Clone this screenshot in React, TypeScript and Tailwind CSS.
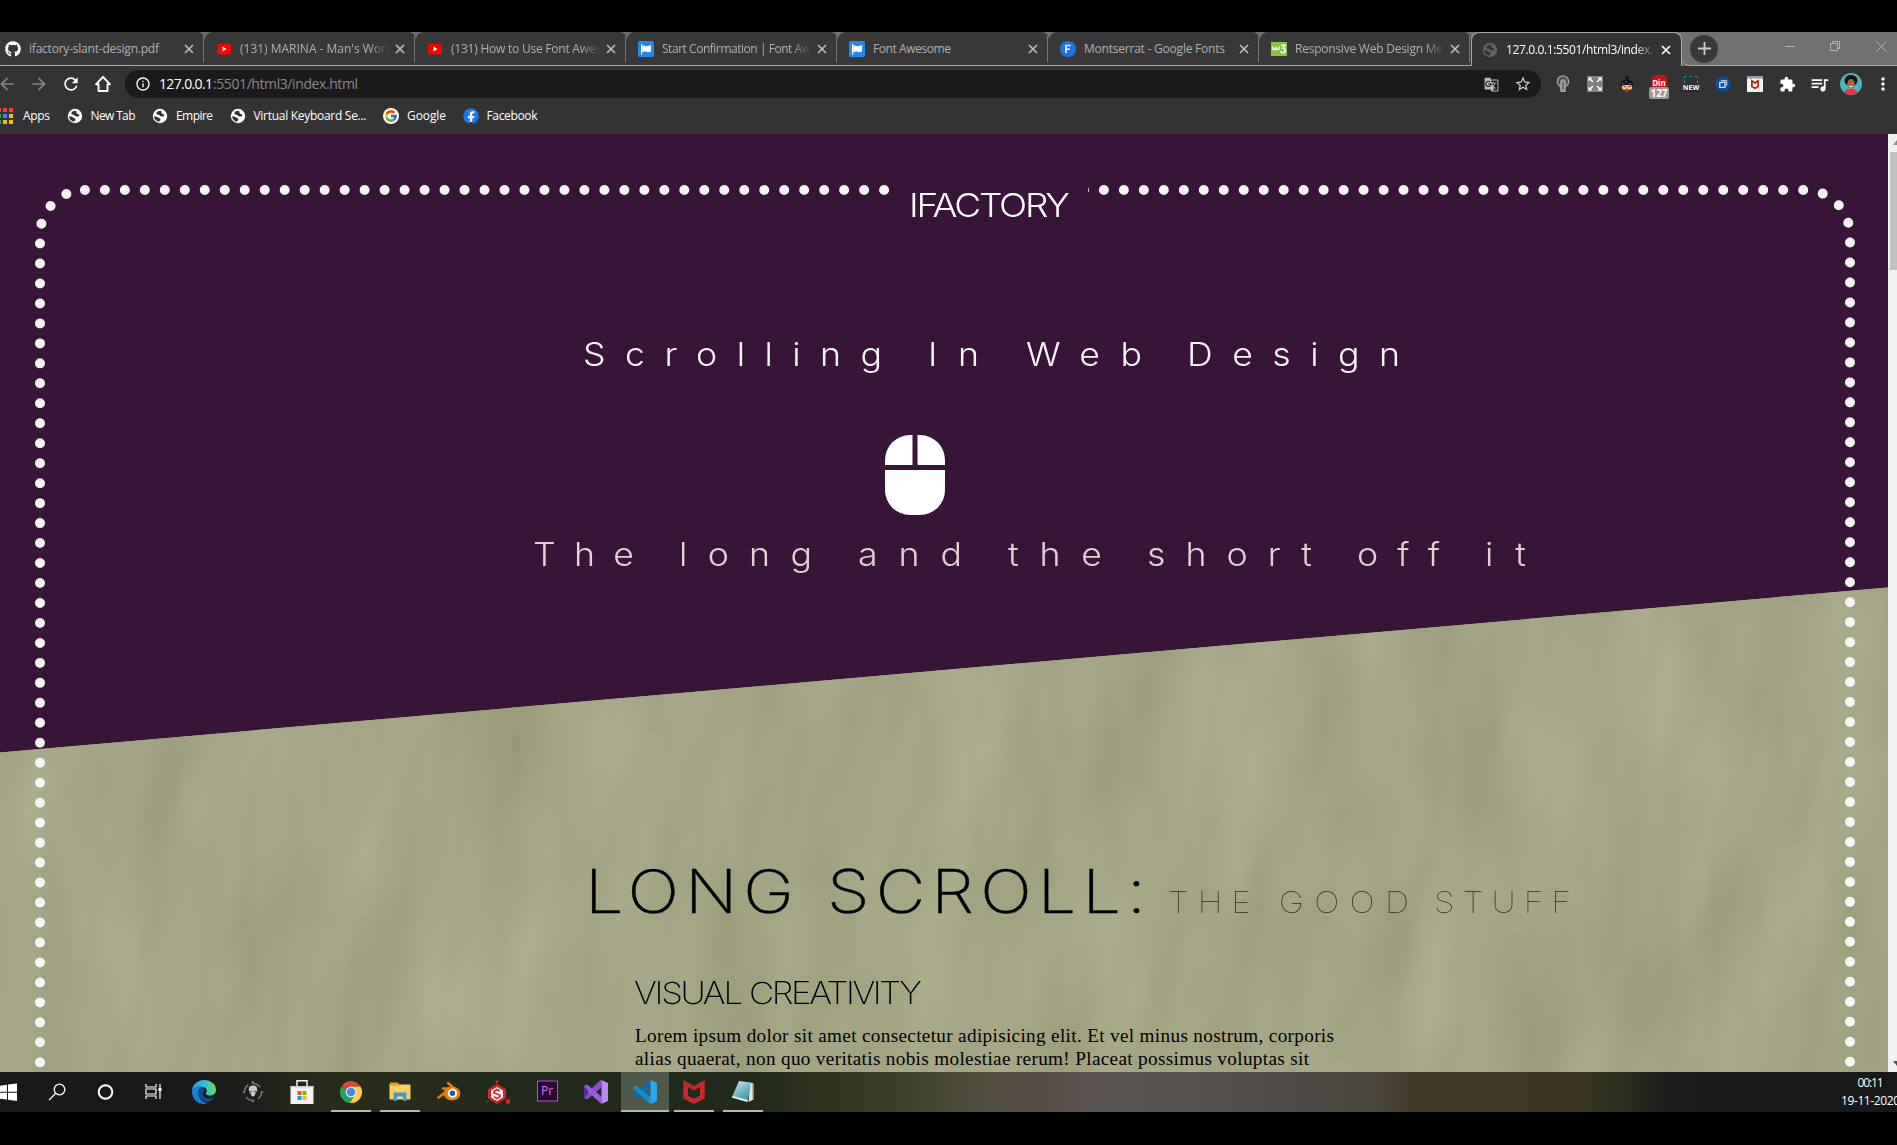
import React, { ReactNode, useLayoutEffect, useRef, useState } from "react";
import { FaGithub, FaFacebook } from "react-icons/fa";
import { FcGoogle } from "react-icons/fc";
import { MdGTranslate, MdStarBorder, MdExtension, MdQueueMusic, MdRefresh, MdInfoOutline, MdArrowBack, MdArrowForward, MdMoreVert } from "react-icons/md";

/* Text tracked so that it spans exactly `w` pixels; `stretch` widens the glyphs. */
function Fit({ w, className = "", stretch = 1, children }: { w: number; className?: string; stretch?: number; children: string }) {
  const ref = useRef<HTMLSpanElement>(null);
  const [ls, setLs] = useState(0);
  useLayoutEffect(() => {
    if (ref.current) {
      const natural = ref.current.getBoundingClientRect().width / stretch - ls * children.length;
      setLs((w / stretch - natural) / (children.length - 1));
    }
  }, [w, stretch, children]);
  return (
    <span className={"block shrink-0 whitespace-pre " + className} style={{ width: w }}>
      <span ref={ref} className="inline-block origin-left" style={{ letterSpacing: ls, transform: stretch === 1 ? undefined : `scaleX(${stretch})` }}>{children}</span>
    </span>
  );
}

const Globe = ({ className }: { className: string }) => (
  <svg viewBox="0 0 16 16" className={"h-4 w-4 shrink-0 " + className}>
    <circle cx="8" cy="8" r="7.200" fill="currentColor" />
    <path d="M9 2.800C7 2.700 4.800 3.500 4.300 5.200c.3 1.300 1.500 1.500 2.500 1.600.9.200.7 1.300 1.800 1.500 1.200.3 2.600.1 3.600-.4.3-1.200-.5-1.900-1.500-2C9.300 5.700 9.700 4 9 2.800zM2 8.200c1.600.2 3.200.3 4.200 1.200.8.800 2.200.7 2.300 1.900 0 1-1 1.400-1.300 2.500C4.400 13.300 2.300 11.500 2 8.200z" fill="#333" />
  </svg>
);

const YouTube = () => (
  <svg viewBox="0 0 16 16" className="h-4 w-4 shrink-0">
    <rect x="1" y="2.500" width="14" height="11" rx="2.500" fill="#f00" />
    <path d="M6.500 5.600v4.800L10.500 8z" fill="#fff" />
  </svg>
);

const Flag = () => (
  <svg viewBox="0 0 16 16" className="h-4 w-4 shrink-0">
    <rect width="16" height="16" rx="1.500" fill="#228ae6" />
    <path d="M3.600 3v10.500" stroke="#fff" strokeWidth="1.200" />
    <path d="M4.200 4.800c2-1.200 3 .7 5 .4 1.300-.1 2.600-.6 3.800-1v6.200c-1.700.9-3 .9-4.400.4-1.500-.5-2.900-.3-4.400.4z" fill="#fff" />
  </svg>
);

const FontsIcon = () => (
  <svg viewBox="0 0 16 16" className="h-4 w-4 shrink-0">
    <circle cx="8" cy="8" r="8" fill="#1a73e8" />
    <path d="M6 12V4.500h4.600M6 8.200h4" stroke="#fff" strokeWidth="1.600" fill="none" />
  </svg>
);

const W3 = () => (
  <svg viewBox="0 0 16 16" className="h-4 w-4 shrink-0">
    <rect y="1" width="16" height="14" fill="#8bc53f" />
    <path d="M1.500 5.500c0 4 3 4 3.200.6.200 3.400 3.600 3.400 3.600-.6" stroke="#fff" strokeWidth="1.300" fill="none" />
    <path d="M10.200 4.200h3.800L11.900 7c3 .1 2.700 4.700.1 4.700-1.200 0-1.900-.6-2.200-1.500" stroke="#fff" strokeWidth="1.400" fill="none" />
  </svg>
);

const Close = ({ className }: { className: string }) => (
  <svg viewBox="0 0 10 10" className={"h-[10px] w-[10px] shrink-0 " + className}>
    <path d="M1 1l8 8M9 1L1 9" stroke="currentColor" strokeWidth="1.700" />
  </svg>
);

type TabInfo = { icon: ReactNode; text: string; w: number; clip?: boolean; active?: boolean };
const tabs: TabInfo[] = [
  { icon: <FaGithub className="h-4 w-4 shrink-0 text-white" />, text: "ifactory-slant-design.pdf", w: 130 },
  { icon: <YouTube />, text: "(131) MARINA - Man's Worl", w: 149, clip: true },
  { icon: <YouTube />, text: "(131) How to Use Font Awes", w: 150, clip: true },
  { icon: <Flag />, text: "Start Confirmation | Font Aw", w: 149, clip: true },
  { icon: <Flag />, text: "Font Awesome", w: 78 },
  { icon: <FontsIcon />, text: "Montserrat - Google Fonts", w: 141 },
  { icon: <W3 />, text: "Responsive Web Design Me", w: 148, clip: true },
  { icon: <Globe className="text-[#5f6368]" />, text: "127.0.0.1:5501/html3/index.", w: 147, clip: true, active: true },
];

function Tab({ t }: { t: TabInfo }) {
  return (
    <div
      className={
        "flex h-full w-[211px] shrink-0 items-center pr-[10px] " +
        (t.active
          ? "rounded-t-lg border border-b-0 border-[#a8a8a8] bg-[#333] pl-[10px] text-white"
          : "rounded-t-lg border-b border-b-[#a8a8a8] bg-[#383838] pl-[11px] text-[#b0b0b0]")
      }
    >
      {t.icon}
      <div className={"ml-[8px] w-[150px] shrink-0 " + (t.clip ? "[mask-image:linear-gradient(to_right,black_86%,transparent_100%)]" : "")}>
        <Fit w={t.w} className="text-[12px] leading-[18px]">{t.text}</Fit>
      </div>
      <Close className={"ml-[5px] " + (t.active ? "text-white" : "text-[#bbb]")} />
      {!t.active && <i className="relative left-[9px] h-[26px] w-px shrink-0 bg-[#777]" />}
    </div>
  );
}

const Bookmark = ({ icon, w, text }: { icon: ReactNode; w: number; text: string }) => (
  <div className="flex items-center gap-2">
    {icon}
    <Fit w={w} className="text-[12px] leading-[18px]">{text}</Fit>
  </div>
);

const appColors = ["#ea4335", "#ea4335", "#ea4335", "#34a853", "#4285f4", "#fbbc05", "#34a853", "#fbbc05", "#fbbc05"];

const Ext = ({ children }: { children: ReactNode }) => <div className="flex w-8 shrink-0 items-center justify-center">{children}</div>;

function Extensions() {
  return (
    <div className="ml-[6px] flex h-8 shrink-0 items-center">
      <Ext>
        <svg viewBox="0 0 16 18" className="h-[18px] w-4">
          <circle cx="8" cy="6.500" r="5.700" fill="#555" stroke="#a5a5a5" strokeWidth="1.200" />
          <path d="M5.700 16.500V7a2.300 2.300 0 0 1 4.600 0v9.500z" fill="#8f8f8f" stroke="#bbb" strokeWidth=".8" />
          <path d="M8 7v7" stroke="#555" />
        </svg>
      </Ext>
      <Ext>
        <svg viewBox="0 0 16 16" className="h-4 w-4">
          <rect width="16" height="16" fill="#808080" />
          <path d="M1.500 5.500v-4h4zM10.500 1.500h4v4zM14.500 10.500v4h-4zM5.500 14.500h-4v-4z" fill="#fff" />
          <path d="M3 3l3 3M13 3l-3 3M13 13l-3-3M3 13l3-3" stroke="#fff" strokeWidth="1.400" fill="none" />
        </svg>
      </Ext>
      <Ext>
        <svg viewBox="0 0 16 18" className="h-[18px] w-4">
          <circle cx="8" cy="3" r="2" fill="#151515" />
          <path d="M2 9c0-6 12-6 12 0v2H2z" fill="#12161c" />
          <path d="M3 8.500h2M6 7h2M10 8.500h2" stroke="#2a6a9a" />
          <path d="M3 10h10v3.500c-2 2.500-8 2.500-10 0z" fill="#f5c88c" />
          <path d="M3 10.500l4 1.500M13 10.500L9 12" stroke="#7a3a10" />
          <path d="M5 14.500l3-1 3 1-3 3z" fill="#d6332a" />
        </svg>
      </Ext>
      <Ext>
        <div className="flex flex-col items-center pt-[5px] font-bold text-white">
          <span className="h-[12px] w-[15px] rounded-t bg-[#cb1317] text-center text-[8px] leading-[16px]">Din</span>
          <span className="relative h-3 w-5 rounded-[2px] bg-[#9a9a9a] text-center text-[10px] leading-3">127</span>
        </div>
      </Ext>
      <Ext>
        <div className="flex h-4 w-4 flex-col items-center justify-between">
          <span className="h-[7px] w-[14px] border border-b-0 border-dashed border-[#128c9b]" />
          <span className="bg-[#222b2e] text-[7px] font-bold leading-[8px] text-white">NEW</span>
        </div>
      </Ext>
      <Ext>
        <svg viewBox="0 0 16 16" className="h-4 w-4">
          <circle cx="8" cy="8" r="7.800" fill="#0c4ea2" />
          <path d="M4.800 6.300h5.200v5H4.800z" stroke="#d8e4f4" strokeWidth="1.300" fill="none" /><path d="M6 4.700h5.700v5" stroke="#d8e4f4" fill="none" />
        </svg>
      </Ext>
      <Ext>
        <svg viewBox="0 0 16 16" className="h-4 w-4">
          <rect width="16" height="16" fill="#f4f4f4" />
          <rect width="16" height="2.500" fill="#8ba0a6" />
          <path d="M4.900 4.800v5.800L8 12.200l3.100-1.600V4.800L8 7z" fill="none" stroke="#c01818" strokeWidth="1.700" />
        </svg>
      </Ext>
      <Ext><MdExtension className="h-[17px] w-[17px] text-white" /></Ext>
      <Ext><MdQueueMusic className="h-[21px] w-[21px] text-white" /></Ext>
      <Ext>
        <svg viewBox="0 0 22 22" className="h-[22px] w-[22px] rounded-full">
          <rect width="22" height="22" fill="#45b8bd" />
          <path d="M3 22c1-5 4-6 8-6s7 2 8 6z" fill="#e8304a" />
          <ellipse cx="11" cy="7.500" rx="6.500" ry="5.800" fill="#161210" />
          <ellipse cx="11" cy="11" rx="3.800" ry="5" fill="#a8673f" />
          <path d="M9 13c1.200 1 2.800 1 4 0" stroke="#fff" fill="none" />
        </svg>
      </Ext>
      <Ext><MdMoreVert className="h-[20px] w-[20px] text-white" /></Ext>
    </div>
  );
}

function Browser() {
  return (
    <header className="h-[102px] shrink-0 bg-[#333] text-white">
      <div className="flex h-[34px] bg-[#707070]">
        <div className="-ml-[6px] flex">{tabs.map((t) => <Tab key={t.text + t.w} t={t} />)}</div>
        <div className="flex flex-1 items-center rounded-bl-lg border-b border-b-[#a8a8a8] pl-[8px]">
          <div className="flex h-7 w-7 items-center justify-center rounded-full bg-[#383838]">
            <svg viewBox="0 0 14 14" className="h-[13px] w-[13px]"><path d="M7 0v14M0 7h14" stroke="#ccc" strokeWidth="2" /></svg>
          </div>
          <svg viewBox="0 0 110 20" className="-mt-[5px] ml-[65px] h-5 w-[110px] shrink-0" fill="none" stroke="#b5b5b5">
            <path d="M2 10.500h10M47.500 7.500h7v7h-7zM49.500 7.500v-2h7v7h-2M93.500 5.500l10 10M103.500 5.500l-10 10" />
          </svg>
        </div>
      </div>
      <div className="flex h-9 items-center">
        <MdArrowBack className="-ml-[3px] h-5 w-5 shrink-0 text-[#858585]" />
        <MdArrowForward className="ml-3 h-5 w-5 shrink-0 text-[#858585]" />
        <MdRefresh className="ml-3 h-5 w-5 shrink-0" />
        <svg viewBox="0 0 18 18" className="ml-[13px] h-[18px] w-[18px] shrink-0">
          <path d="M9 1.800L2 9.300h2.500V16h9V9.300H16z" fill="none" stroke="#fff" strokeWidth="1.900" strokeLinejoin="round" />
        </svg>
        <div className="ml-[13px] flex h-7 w-[1416px] shrink-0 items-center rounded-full bg-[#1a1a1a] pl-[10px] pr-[9px]">
          <MdInfoOutline className="h-4 w-4" />
          <div className="ml-[8px] flex text-[14px] leading-5">
            <Fit w={54}>127.0.0.1</Fit>
            <Fit w={145} className="text-[#8a8a8a]">:5501/html3/index.html</Fit>
          </div>
          <MdGTranslate className="ml-auto h-[15px] w-[15px] text-[#bdbdbd]" />
          <MdStarBorder className="ml-[15px] h-[18px] w-[18px] text-[#d0d0d0]" />
        </div>
        <Extensions />
      </div>
      <div className="flex h-[27px] items-center gap-[16.500px]">
        <div className="-ml-[3px] flex items-center gap-[10px]">
          <div className="grid h-4 w-4 grid-cols-3 gap-[2px]">
            {appColors.map((c, i) => <i key={i} className="h-[4px] w-[4px]" style={{ background: c }} />)}
          </div>
          <Fit w={27} className="text-[12px] leading-[18px]">Apps</Fit>
        </div>
        <Bookmark icon={<Globe className="text-white" />} w={45} text="New Tab" />
        <Bookmark icon={<Globe className="text-white" />} w={37} text="Empire" />
        <Bookmark icon={<Globe className="text-white" />} w={113} text="Virtual Keyboard Se..." />
        <Bookmark icon={<span className="flex h-4 w-4 items-center justify-center rounded-full bg-white"><FcGoogle className="h-[14px] w-[14px]" /></span>} w={39} text="Google" />
        <Bookmark icon={<FaFacebook className="h-4 w-4 rounded-full bg-[radial-gradient(white_55%,transparent_56%)] text-[#1877f2]" />} w={51} text="Facebook" />
      </div>
    </header>
  );
}

/* Crumpled paper, cut by the purple slant. */
function Backdrop() {
  return (
    <svg viewBox="0 0 1888 938" className="absolute inset-0 h-[938px] w-[1888px]">
      <defs>
        <filter id="paper" x="0" y="0" width="100%" height="100%" colorInterpolationFilters="sRGB">
          <feTurbulence type="fractalNoise" baseFrequency="0.015 0.0042" numOctaves="3" seed="11" />
          <feColorMatrix values="0.11 0 0 0 0.588  0.11 0 0 0 0.592  0.12 0 0 0 0.457  0 0 0 0 1" />
        </filter>
        <clipPath id="slant"><path d="M0 618.500L1888 453.500V938H0z" /></clipPath>
      </defs>
      <rect width="1888" height="938" fill="#371438" />
      <g clipPath="url(#slant)">
        <rect width="2500" height="938" fill="#a4a484" />
        <rect width="2300" height="938" filter="url(#paper)" transform="skewX(-6)" />
      </g>
    </svg>
  );
}

function DottedFrame() {
  return (
    <svg viewBox="0 0 1888 938" className="absolute inset-0 h-[938px] w-[1888px]">
      <g fill="none" stroke="#f7f5f4" strokeWidth="10" strokeLinecap="round">
        <path d="M40 928.300V101A45 45 0 0 1 83 56.050" strokeDasharray="0 19.970" />
        <path d="M84.900 56H1805A45 45 0 0 1 1850 101V935" strokeDasharray="0 19.980" />
      </g>
    </svg>
  );
}

const Words = ({ list, className }: { list: { t: string; w: number; g: number }[]; className: string }) => (
  <div className={"flex h-10 text-[32.500px] font-light leading-10 " + className}>
    {list.map((x) => (
      <span key={x.t} style={{ marginLeft: x.g }}><Fit w={x.w} stretch={1.1}>{x.t}</Fit></span>
    ))}
  </div>
);

function Page() {
  return (
    <main className="relative flex h-[938px] shrink-0 overflow-hidden">
      <Backdrop />
      <DottedFrame />
      <div className="relative w-[1888px] shrink-0 pt-[46px] font-['Inter',sans-serif]">
        <h1 className="ml-[889px] h-[46px] w-[199px] bg-[#371438] pl-[20px] pt-[6px] text-[32.500px] font-light leading-10 text-white">
          <Fit w={161} stretch={1.14}>IFACTORY</Fit>
        </h1>
        <Words
          className="mt-[109px] pl-[583px] text-[#fbf5f7]"
          list={[{ t: "Scrolling", w: 299, g: 0 }, { t: "In", w: 51, g: 46 }, { t: "Web", w: 116, g: 47 }, { t: "Design", w: 213, g: 45 }]}
        />
        <svg viewBox="0 0 384 512" className="ml-[884.500px] mt-[60px] h-20 w-[60px]" fill="#fff">
          <path d="M0 352a160 160 0 0 0 160 160h64a160 160 0 0 0 160-160V224H0zM176 0h-16A160 160 0 0 0 0 160v32h176zm48 0h-16v192h176v-32A160 160 0 0 0 224 0z" />
        </svg>
        <Words
          className="mt-[20px] pl-[533px] text-[#e4cfd2]"
          list={[
            { t: "The", w: 101, g: 0 }, { t: "long", w: 133, g: 45 }, { t: "and", w: 104, g: 46 }, { t: "the", w: 94, g: 46 },
            { t: "short", w: 165, g: 45 }, { t: "off", w: 83, g: 45 }, { t: "it", w: 41, g: 45 },
          ]}
        />
        <div className="mt-[281px] flex h-[70px] items-baseline pl-[585px] leading-[70px] text-black">
          <h2 className="flex text-[60px] font-extralight [-webkit-text-stroke:0.4px_black]">
            <Fit w={209} stretch={1.14}>LONG</Fit>
            <Fit w={319} stretch={1.14} className="ml-[33px]">SCROLL:</Fit>
          </h2>
          <div className="ml-[22px] flex text-[30px] font-thin text-[#2c2c26]">
            <Fit w={83} stretch={1.12}>THE</Fit>
            <Fit w={130} stretch={1.12} className="ml-[28px]">GOOD</Fit>
            <Fit w={137} stretch={1.12} className="ml-[25px]">STUFF</Fit>
          </div>
        </div>
        <h3 className="mt-[47px] flex h-10 pl-[634px] text-[30.500px] font-extralight leading-10 text-black">
          <Fit w={109} stretch={1.14}>VISUAL</Fit>
          <Fit w={173} stretch={1.14} className="ml-[6px]">CREATIVITY</Fit>
        </h3>
        <p className="mt-[11px] pl-[635px] font-['Liberation_Serif',serif] text-[19.200px] leading-[23px] text-black">
          <Fit w={699}>Lorem ipsum dolor sit amet consectetur adipisicing elit. Et vel minus nostrum, corporis</Fit>
          <Fit w={674}>alias quaerat, non quo veritatis nobis molestiae rerum! Placeat possimus voluptas sit</Fit>
        </p>
      </div>
      <div className="relative flex w-[9px] flex-col justify-between overflow-hidden bg-[#f1f1f1]">
        <svg viewBox="0 0 9 136" className="h-[136px] w-[9px] shrink-0"><path d="M9 6v5H5z" fill="#8a8a8a" /><path d="M2 18h7v118H2z" fill="#c1c1c1" /></svg>
        <svg viewBox="0 0 9 17" className="h-[17px] w-[9px] shrink-0"><path d="M5 6h4v5z" fill="#505050" /></svg>
      </div>
    </main>
  );
}

type TaskApp = { icon: ReactNode; open?: boolean; focus?: boolean };
const S = ({ children }: { children: ReactNode }) => <svg viewBox="0 0 24 24" className="h-6 w-6">{children}</svg>;
const apps: TaskApp[] = [
  { icon: <S><path d="M3.500 5.800l7.500-1v7H3.500zM12 4.600l9-1.100v8.300h-9zM3.500 12.700H11v6.900l-7.500-1zM12 12.700h9V21l-9-1.200z" fill="#fff" /></S> },
  { icon: <S><g fill="none" stroke="#fff" strokeWidth="1.300"><circle cx="14.500" cy="9.500" r="5.300" /><path d="M10.500 13.500L4 20" /></g></S> },
  { icon: <S><circle cx="11.500" cy="12" r="6.800" fill="none" stroke="#fff" strokeWidth="2" /></S> },
  { icon: <S><g fill="none" stroke="#fff" strokeWidth="1.200"><path d="M3 4v3h10V4M3 19v-3h10v3M3 9h10v5H3zM17 4v15" /><path d="M15.500 9.500h3" strokeWidth="3" /></g></S> },
  {
    icon: (
      <S>
        <defs>
          <linearGradient id="eg" x1="0" x2="1"><stop offset="0" stopColor="#1f9be8" /><stop offset=".55" stopColor="#2fc4dc" /><stop offset="1" stopColor="#6be04c" /></linearGradient>
        </defs>
        <path d="M0 11C0 4 6 0 12 0c7 0 12 4.500 12 9.500 0 4-3 6-6 6s-5-1.200-4-2.500c2-3 0-6-4-6-5 0-9 2-10 4z" fill="url(#eg)" />
        <path d="M0 11c2-4 6-5.500 10-4.500-3 1.500-4 5-3.500 8 .6 4 4 8 9 9C6 26 0 19 0 11z" fill="#0f82dc" />
        <path d="M10 7c-4 3-4.500 9 0 13 4 3.500 9 2.500 12-2.500-3 1.500-7 1.500-9.500-.5-2-1.700-2-4-.5-5.500 1-1.500 0-3.500-2-4.500z" fill="#114a97" />
      </S>
    ),
  },
  {
    icon: (
      <S>
        <circle cx="12" cy="12" r="8.500" fill="none" stroke="#70767a" strokeWidth="1.600" strokeDasharray="8 5.350" />
        <path d="M12 .5l2 3h-4zM12 23l1.500-3h-3zM1 12l3-1.500v3zM23 12l-3-1.500v3z" fill="#7b8185" />
        <path d="M12 5.500c3 0 4.500 2 4.200 4.500-.2 2-2 3-2.200 4.500-.2 2.500-3.800 2.500-4 0-.2-1.500-2-2.500-2.200-4.500C7.500 7.500 9 5.500 12 5.500z" fill="#c8cccd" />
        <path d="M9 11l2 1M15 11l-2 1" stroke="#555" strokeWidth="1.200" />
      </S>
    ),
  },
  {
    icon: (
      <S>
        <path d="M7 7V.8h10V7" fill="none" stroke="#f3f3f3" strokeWidth="1.500" />
        <path d="M.5 6h23v18H.5z" fill="#f3f3f3" /><path d="M.5 6h23v1.500H.5z" fill="#ccc" />
        <path d="M7.500 11h4v4h-4z" fill="#f25022" /><path d="M12.500 11h4v4h-4z" fill="#7fba00" />
        <path d="M7.500 16h4v4h-4z" fill="#00a4ef" /><path d="M12.500 16h4v4h-4z" fill="#ffb900" />
      </S>
    ),
  },
  {
    icon: (
      <S>
        <path d="M12 12L2.500 6.500A11 11 0 0 1 21.500 6.500H12z" fill="#dc4437" />
        <path d="M12 12l-9.500-5.500A11 11 0 0 0 11 23l5-8.500z" fill="#1fa463" />
        <path d="M12 6.500h9.500A11 11 0 0 1 11 23l5-8.500z" fill="#ffce44" />
        <circle cx="12" cy="12" r="5.400" fill="#f1f1f1" /><circle cx="12" cy="12" r="4.300" fill="#4687f4" />
      </S>
    ),
    open: true,
  },
  {
    icon: (
      <S>
        <path d="M2 2.500h8l1.500 3H2z" fill="#e09b12" /><path d="M1.500 4.500h21v15h-21z" fill="#fcd05c" /><path d="M1.500 4.500h9v1.500h-9z" fill="#e8a51c" />
        <path d="M5.500 21v-8.500h13V21h-3.300v-4.500H8.800V21z" fill="#3c97da" />
      </S>
    ),
    open: true,
  },
  {
    icon: (
      <S>
        <path d="M11 3l7 6M6 8.500h10M1.500 17.500L12 9.500" stroke="#e87d0d" strokeWidth="2.400" strokeLinecap="round" />
        <ellipse cx="15" cy="13.500" rx="8.300" ry="7" fill="#e87d0d" /><circle cx="15.500" cy="13.300" r="4.700" fill="#fff" /><circle cx="15.500" cy="13.300" r="2.700" fill="#265787" />
      </S>
    ),
  },
  {
    icon: (
      <S>
        <circle cx="11" cy="1.800" r="1.600" fill="#d9202c" /><circle cx="22" cy="21.500" r="2.400" fill="#e01f2d" /><circle cx="1.500" cy="21.500" r="1" fill="#d9202c" />
        <path d="M11 4.500l8.500 5v8.500L11 23.500 2.500 18V9.500z" fill="#e01f2d" stroke="#e01f2d" strokeLinejoin="round" />
        <path d="M11 7l6 3.500v7L11 21l-6-3.500v-7z" fill="#fff" />
        <path d="M14 11l-3-1.500-3 2v1.500l6 2v1.500l-3 2-3-1.700" fill="none" stroke="#e01f2d" strokeWidth="1.700" />
      </S>
    ),
  },
  {
    icon: (
      <div className="flex h-[21px] w-[21px] -translate-y-[1.500px] items-center justify-center border border-[#b950dd] bg-[#2a0634] font-['Open_Sans',sans-serif] text-[12px] leading-none text-[#d977f5]">Pr</div>
    ),
  },
  {
    icon: (
      <S>
        <path d="M17.500 0v7.500L3 19.500 0 18V16L16.500 0z" fill="#8a4bd0" /><path d="M0 6l3-1.500 14.500 12V24L0 8z" fill="#9a5be0" /><path d="M0 6l3.500 4v5L0 18z" fill="#5b2e91" />
        <path d="M17.500 0L24 3v18l-6.500 3z" fill="#b98af0" />
      </S>
    ),
  },
  {
    icon: (
      <S>
        <path d="M17.500 0v7L3 18.500 0 16.500v-1z" fill="#0071b8" /><path d="M0 7.500L3 5.500 17.500 17v7L0 8.500z" fill="#0f8fdb" /><path d="M17.500 0L24 3v18l-6.500 3z" fill="#2aa7f2" />
      </S>
    ),
    open: true,
    focus: true,
  },
  { icon: <S><path d="M1.200 0L12 6l10.800-6v18.500L12 24 1.200 18.500zM6 7v8.700l6 3 6-3V7l-6 3.500z" fill="#c2282d" fillRule="evenodd" /></S>, open: true },
  {
    icon: (
      <S>
        <defs><linearGradient id="np" x1="0" y1="0" x2=".6" y2="1"><stop offset="0" stopColor="#e6f4f6" /><stop offset=".6" stopColor="#6bb5c2" /><stop offset="1" stopColor="#3f98ab" /></linearGradient></defs>
        <path d="M19 2.500l3.500 1v16l-5 2.500z" fill="#dfe6e4" /><path d="M22 4v15" stroke="#a4773b" />
        <path d="M8 1l12 1.500-3.500 19.500L.8 17.500z" fill="url(#np)" /><path d="M.8 17.500L16.500 22v-2L2 16z" fill="#e5f1f1" />
      </S>
    ),
    open: true,
  },
];

function Taskbar() {
  return (
    <footer className="flex h-10 shrink-0 overflow-hidden bg-[linear-gradient(to_right,#191919_0,#191919_200px,#1d211b_260px,#282d1b_320px,#272c1b_420px,#212a1b_500px,#20291a_740px,#34351f_840px,#444530_930px,#524f40_990px,#564b47_1040px,#5c5653_1100px,#575350_1160px,#4d4a47_1290px,#4a463b_1370px,#413c2a_1410px,#393522_1580px,#2e2f1e_1620px,#1c201d_1660px,#181818_1710px)]">
      <div className="-ml-[16.500px] flex">
        {apps.map((a, i) => (
          <div key={i} className="flex w-[49px] shrink-0 flex-col items-center">
            <div className={"flex h-[38px] items-center justify-center pt-[2px] " + (a.focus ? "w-12 bg-[#4f5849]" : "w-10")}>{a.icon}</div>
            {a.open && <i className={"h-[2px] bg-[#b5b7b3] " + (a.focus ? "w-12" : "w-10")} />}
          </div>
        ))}
      </div>
      <div className="ml-auto -mr-[3px] flex shrink-0 flex-col items-center pt-[2px] text-[12px] leading-[18px] text-white">
        <Fit w={26}>00:11</Fit>
        <Fit w={59}>19-11-2020</Fit>
      </div>
    </footer>
  );
}

export default function App() {
  return (
    <div className="flex h-[1145px] w-[1897px] flex-col overflow-hidden bg-black pt-8 font-['Open_Sans','Noto_Sans',sans-serif]">
      <Browser />
      <Page />
      <Taskbar />
    </div>
  );
}
